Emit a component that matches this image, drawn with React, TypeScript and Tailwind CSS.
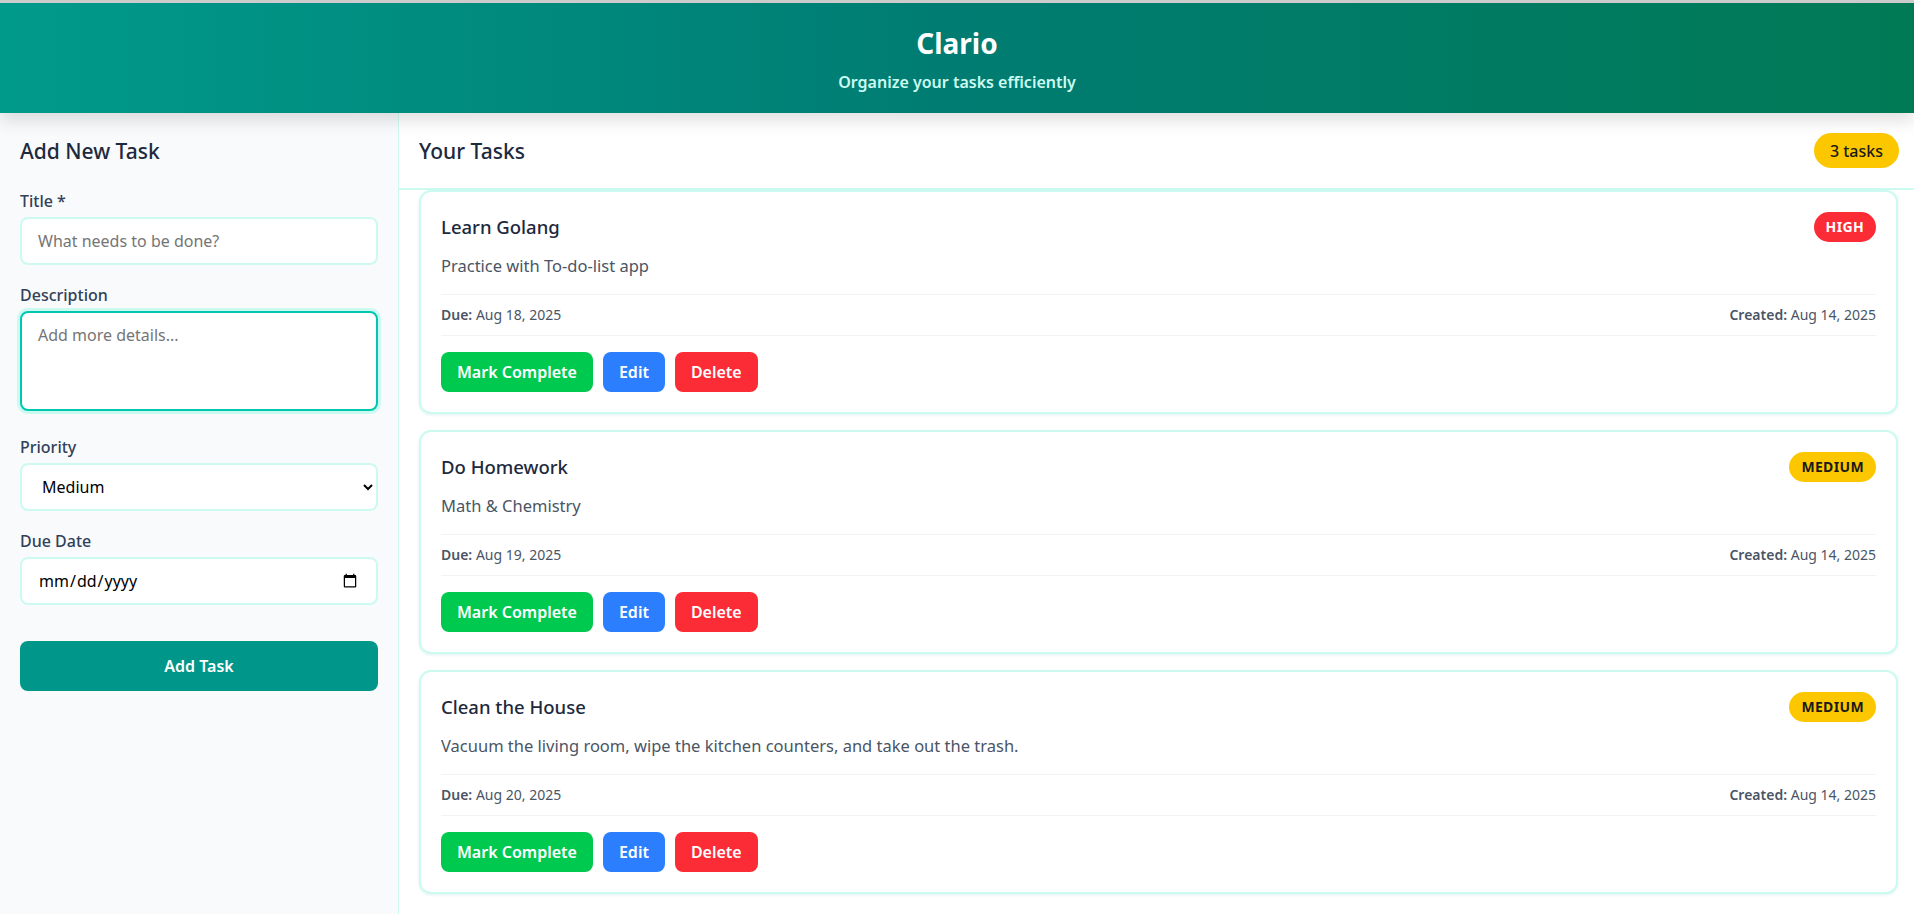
import { useState } from 'react'

type Priority = 'high' | 'medium' | 'low'

type Task = {
  id: number
  title: string
  description: string
  priority: Priority
  due: string
  created: string
}

const tasks: Task[] = [
  {
    id: 1,
    title: 'Learn Golang',
    description: 'Practice with To-do-list app',
    priority: 'high',
    due: 'Aug 18, 2025',
    created: 'Aug 14, 2025',
  },
  {
    id: 2,
    title: 'Do Homework',
    description: 'Math & Chemistry',
    priority: 'medium',
    due: 'Aug 19, 2025',
    created: 'Aug 14, 2025',
  },
  {
    id: 3,
    title: 'Clean the House',
    description: 'Vacuum the living room, wipe the kitchen counters, and take out the trash.',
    priority: 'medium',
    due: 'Aug 20, 2025',
    created: 'Aug 14, 2025',
  },
]

const badgeStyles: Record<Priority, string> = {
  high: 'bg-[#fb2c36] text-white',
  medium: 'bg-[#fdc700] text-[#1a1a1a]',
  low: 'bg-[#00c950] text-white',
}

function PriorityBadge({ priority }: { priority: Priority }) {
  return (
    <span
      className={`flex h-[30px] items-center rounded-full px-3 text-sm font-bold uppercase tracking-wide ${badgeStyles[priority]}`}
    >
      {priority}
    </span>
  )
}

function TaskCard({ task }: { task: Task }) {
  return (
    <article className="rounded-xl border-2 border-[#cdfaf0] bg-white p-5 shadow-[0_1px_3px_rgba(0,150,137,0.12)]">
      <div className="flex items-center justify-between">
        <h3 className="text-[18.5px] font-medium leading-7 text-[#1d293d]">{task.title}</h3>
        <PriorityBadge priority={task.priority} />
      </div>

      <p className="mt-3 text-[16.5px] leading-6 text-[#4a5565]">{task.description}</p>

      <div className="mt-4 flex items-center justify-between border-y border-[#f1f3f5] py-2.5 text-sm leading-5 text-[#4a5565]">
        <span>
          <span className="font-semibold">Due:</span> {task.due}
        </span>
        <span>
          <span className="font-semibold">Created:</span> {task.created}
        </span>
      </div>

      <div className="mt-4 flex gap-2.5">
        <button className="h-10 rounded-lg bg-[#00c950] px-4 text-base font-semibold text-white">
          Mark Complete
        </button>
        <button className="h-10 rounded-lg bg-[#2b7fff] px-4 text-base font-semibold text-white">Edit</button>
        <button className="h-10 rounded-lg bg-[#fb2c36] px-4 text-base font-semibold text-white">Delete</button>
      </div>
    </article>
  )
}

function AddTaskForm() {
  const [priority, setPriority] = useState('medium')

  return (
    <aside className="w-[399px] shrink-0 border-r border-[#cdfaf0] bg-[#f8fafc] px-5 pt-6">
      <h2 className="mb-6 text-[21px] font-medium leading-7 text-[#1d293d]">Add New Task</h2>

      <div className="mb-[18px]">
        <label className="mb-1 block text-base font-medium leading-6 text-[#314158]">Title *</label>
        <input
          type="text"
          placeholder="What needs to be done?"
          className="h-12 w-full rounded-lg border-2 border-[#cdfaf0] bg-white px-4 text-base text-black outline-none placeholder:text-[#757575]"
        />
      </div>

      <div className="mb-[18px]">
        <label className="mb-1 block text-base font-medium leading-6 text-[#314158]">Description</label>
        <textarea
          placeholder="Add more details..."
          className="block h-[100px] w-full resize-none rounded-lg border-2 border-[#00c7b0] bg-white px-4 py-2.5 text-base text-black shadow-[0_0_0_3px_#cdfaf0] outline-none placeholder:text-[#757575]"
        />
      </div>

      <div className="mb-[18px] pt-1.5">
        <label className="mb-1 block text-base font-medium leading-6 text-[#314158]">Priority</label>
        <select
          value={priority}
          onChange={(e) => setPriority(e.target.value)}
          className="h-12 w-full rounded-lg border-2 border-[#cdfaf0] bg-white px-4 text-base text-black outline-none"
        >
          <option value="low">Low</option>
          <option value="medium">Medium</option>
          <option value="high">High</option>
        </select>
      </div>

      <div className="mb-9">
        <label className="mb-1 block text-base font-medium leading-6 text-[#314158]">Due Date</label>
        <input
          type="date"
          className="h-12 w-full rounded-lg border-2 border-[#cdfaf0] bg-white px-4 text-base text-black outline-none"
        />
      </div>

      <button className="h-[50px] w-full rounded-lg bg-[#009689] text-base font-semibold text-white">Add Task</button>
    </aside>
  )
}

export default function App() {
  return (
    <div className="flex h-screen flex-col overflow-hidden bg-white font-['Noto_Sans',sans-serif]">
      <header className="relative z-10 flex h-[113px] shrink-0 flex-col items-center border-t-[3px] border-[#cccccc] bg-gradient-to-r from-[#009a8b] via-[#007c72] to-[#007a55] shadow-[0_8px_16px_rgba(0,0,0,0.12)]">
        <h1 className="mt-[22px] text-[28px] font-bold leading-9 text-white">Clario</h1>
        <p className="mt-[11px] text-base font-semibold leading-5 text-[#cbfbf1]">Organize your tasks efficiently</p>
      </header>

      <div className="flex min-h-0 flex-1">
        <AddTaskForm />

        <main className="flex min-w-0 flex-1 flex-col">
          <div className="flex items-center justify-between border-b-2 border-[#cdfaf0] py-5 pl-5 pr-[15px]">
            <h2 className="text-[21px] font-medium leading-7 text-[#1d293d]">Your Tasks</h2>
            <span className="flex h-[35px] items-center rounded-full bg-[#fdc700] px-4 text-base font-medium text-[#1a1a1a]">
              3 tasks
            </span>
          </div>

          <div className="flex flex-col gap-4 pl-5 pr-4">
            {tasks.map((task) => (
              <TaskCard key={task.id} task={task} />
            ))}
          </div>
        </main>
      </div>
    </div>
  )
}
